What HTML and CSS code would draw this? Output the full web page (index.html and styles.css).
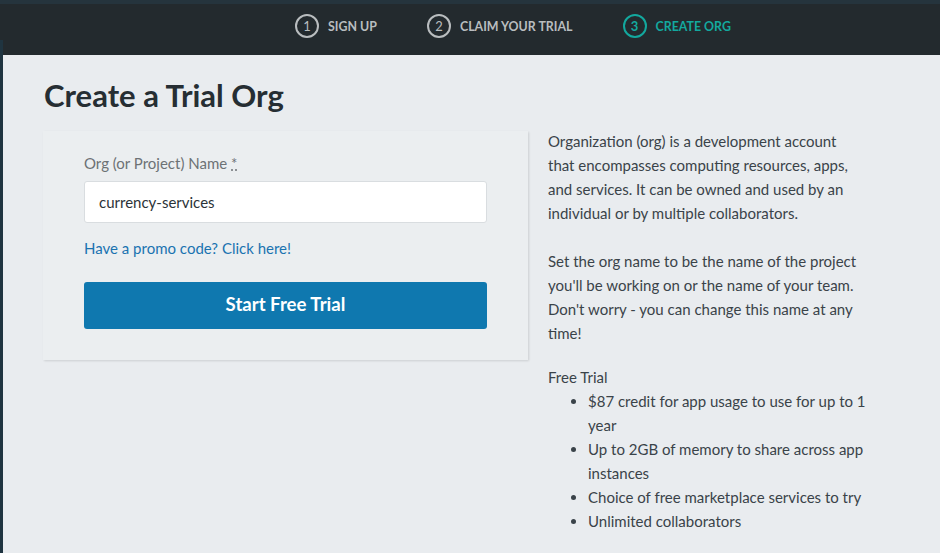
FILE: index.html
```html
<!DOCTYPE html>
<html lang="en">
<head>
<meta charset="utf-8">
<title>Create a Trial Org</title>
<link rel="stylesheet" href="styles.css">
</head>
<body>
<div class="topstrip"></div>
<header class="header">
  <nav class="steps">
    <div class="step"><span class="num">1</span><span class="label">SIGN UP</span></div>
    <div class="step"><span class="num">2</span><span class="label">CLAIM YOUR TRIAL</span></div>
    <div class="step active"><span class="num">3</span><span class="label">CREATE ORG</span></div>
  </nav>
</header>
<main class="page">
  <h1 class="title">Create a Trial Org</h1>
  <div class="columns">
    <section class="card">
      <label class="field-label" for="org">Org (or Project) Name <abbr class="req" title="required">*</abbr></label>
      <input class="field-input" id="org" type="text" value="currency-services">
      <a class="promo" href="#">Have a promo code? Click here!</a>
      <button class="btn" type="button">Start Free Trial</button>
    </section>
    <aside class="info">
      <p>Organization (org) is a development account that encompasses computing resources, apps, and services. It can be owned and used by an individual or by multiple collaborators.</p>
      <p class="last">Set the org name to be the name of the project you'll be working on or the name of your team. Don't worry - you can change this name at any time!</p>
      <div class="trial">
        <div>Free Trial</div>
        <ul>
          <li>$87 credit for app usage to use for up to 1 year</li>
          <li>Up to 2GB of memory to share across app instances</li>
          <li>Choice of free marketplace services to try</li>
          <li>Unlimited collaborators</li>
        </ul>
      </div>
    </aside>
  </div>
</main>
</body>
</html>
```
FILE: styles.css
```css
* { box-sizing: border-box; }
html, body { margin: 0; padding: 0; }
body {
  font-family: "Lato", "Open Sans", sans-serif;
  background: #1f3440;
  color: #3a4349;
  height: 553px;
  overflow: hidden;
}
.topstrip { height: 4px; background: #25343d; }
.header {
  height: 51px;
  padding-bottom: 7px;
  background:
    linear-gradient(#232a2e, #232a2e) 3px 0 / 100% 100% no-repeat,
    linear-gradient(#232a2e, #232a2e) 0 0 / 3px 36px no-repeat,
    #1f3440;
  display: flex;
  justify-content: center;
  align-items: center;
}
.steps { display: flex; gap: 50px; margin-left: 86px; }
.step { display: flex; align-items: center; gap: 9px; color: #b9bdbf; font-weight: 700; font-size: 12.4px; }
.num {
  width: 24px; height: 24px; border-radius: 50%;
  border: 2px solid #b9bdbf;
  display: flex; align-items: center; justify-content: center;
  font-size: 13px; font-weight: 400;
}
.step.active { color: #13a89e; }
.step.active .num { border-color: #13a89e; font-weight: 700; }
.page {
  margin-left: 3px;
  background: #e9ecef;
  height: 498px;
  padding: 22px 0 0 41px;
}
.title { margin: 0 0 18px; font-size: 31px; font-weight: 700; color: #262e33; line-height: 36px; }
.columns { display: flex; gap: 20px; align-items: flex-start; }
.card {
  width: 485px; margin-left: -1px;
  background: #ebeef0;
  box-shadow: 1px 1px 2px rgba(0,0,0,0.12);
  padding: 20px 41px 31px;
  display: flex; flex-direction: column;
}
.field-label { font-size: 15px; color: #6d7275; line-height: 24px; margin-bottom: 6px; }
.req { text-decoration: underline dotted; border: 0; }
.field-input {
  width: 403px; height: 42px;
  border: 1px solid #d9dde0; border-radius: 3px;
  background: #fff;
  padding: 0 14px;
  font: inherit; font-size: 15px; color: #2b3338;
  outline: none;
}
.promo { margin-top: 13px; font-size: 15px; line-height: 24px; color: #1a73b0; text-decoration: none; }
.btn {
  margin-top: 22px;
  width: 403px; height: 47px;
  padding: 0 0 3px;
  background: #0f78af; color: #fff;
  border: 0; border-radius: 3px;
  font: inherit; font-size: 18.6px; font-weight: 700;
}
.info { width: 316px; font-size: 15px; line-height: 24px; color: #3a4349; margin-top: -2px; }
.info p { margin: 0 0 24px; }
.info p.last { margin-bottom: 20px; }
.trial ul { margin: 0 -12px 0 0; padding-left: 40px; }
```
